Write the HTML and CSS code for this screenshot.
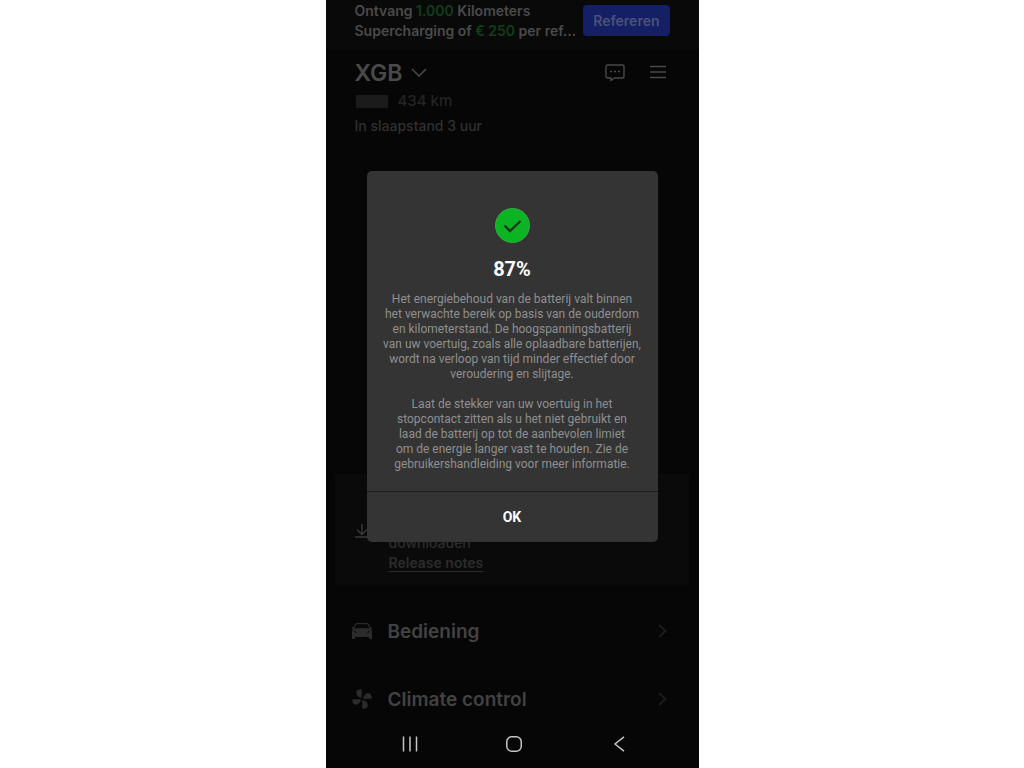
FILE: index.html
```html
<!DOCTYPE html>
<html lang="nl">
<head>
<meta charset="utf-8">
<meta name="viewport" content="width=device-width, initial-scale=1">
<title>Batterijstatus</title>
<link rel="stylesheet" href="styles.css">
</head>
<body>
<div class="phone">
  <div class="app">
    <section class="promo">
      <p class="promo-text">Ontvang <span class="accent">1.000</span> Kilometers<br>Supercharging of <span class="accent">€ 250</span> per ref…</p>
      <button class="promo-button" type="button">Refereren</button>
    </section>
    <header class="header">
      <div class="title-row">
        <button class="vehicle" type="button">
          <span>XGB</span>
          <svg width="16" height="10" viewBox="0 0 16 10" fill="none" stroke="currentColor" stroke-width="1.5"><path d="M1 1l7 7 7-7"/></svg>
        </button>
        <div class="actions">
          <button class="icon-button" type="button" aria-label="Berichten">
            <svg width="20" height="18" viewBox="0 0 20 18" fill="none" stroke="currentColor" stroke-width="1.4" stroke-linejoin="round"><path d="M2.500 1h15Q19 1 19 2.500v10Q19 14 17.500 14H9.500l-3.500 2.500V14H2.500Q1 14 1 12.500v-10Q1 1 2.500 1z"/><path d="M5 7.500h2M9 7.500h2M13 7.500h2" stroke-width="1.600"/></svg>
          </button>
          <button class="icon-button" type="button" aria-label="Menu">
            <svg width="16" height="18" viewBox="0 0 16 18" fill="none" stroke="currentColor" stroke-width="1.500"><path d="M0 2.500h16M0 8h16M0 13.500h16"/></svg>
          </button>
        </div>
      </div>
      <p class="range"><span class="battery"></span>434 km</p>
      <p class="status">In slaapstand 3 uur</p>
    </header>
    <section class="update">
      <svg class="update-icon" width="15" height="14" viewBox="0 0 15 14" fill="none" stroke="currentColor" stroke-width="1.400"><path d="M7 0v10M2 5.500l5 5 5-5M0 13h14"/></svg>
      <div class="update-text">
        <p>downloaden</p>
        <a class="notes" href="#">Release notes</a>
      </div>
    </section>
    <nav class="menu">
      <a class="menu-item" href="#">
        <svg width="20" height="16" viewBox="0 0 20 16" fill="currentColor" fill-rule="evenodd"><path d="M5 0h10q1.500 0 2.200 1.500L18.500 4.500l1.500-.5v1.500l-1 .7q1 1 1 2.500V16h-3v-2H3v2H0V8.700q0-1.500 1-2.500l-1-.7V4l1.500.5 1.300-3Q3.500 0 5 0zM5 1.300q-.8 0-1.200.9L2.500 5.500q7.500-1 15 0l-1.300-3.300q-.4-.9-1.200-.9zM2 8q0 1.800 3 1.800-.7-1.500-3-1.800zm16 0q-2.300.3-3 1.800 3 0 3-1.800z"/></svg>
        <span>Bediening</span>
        <svg class="chevron" width="9" height="14" viewBox="0 0 9 14" fill="none" stroke="currentColor" stroke-width="2"><path d="M1 1l6.500 6L1 13"/></svg>
      </a>
      <a class="menu-item" href="#">
        <svg width="20" height="20" viewBox="0 0 20 20" fill="currentColor"><path d="M9.700 9V.3Q3.800 0 4.300 4.500 5 8 9.700 9z"/><path d="M11 9.700h8.700Q20 3.800 15.500 4.300 12 5 11 9.700z"/><path d="M10.300 11v8.700q5.900.3 5.400-4.200-.7-3.500-5.400-4.500z"/><path d="M9 10.300H.3Q0 16.200 4.500 15.700 8 15 9 10.300z"/></svg>
        <span>Climate control</span>
        <svg class="chevron" width="9" height="14" viewBox="0 0 9 14" fill="none" stroke="currentColor" stroke-width="2"><path d="M1 1l6.500 6L1 13"/></svg>
      </a>
    </nav>
  </div>
  <nav class="system-bar">
    <button class="icon-button" type="button" aria-label="Recent"><svg width="16" height="16" viewBox="0 0 16 16" stroke="currentColor" stroke-width="1.500"><path d="M1.500 0.500v15M8 0.500v15M14.500 0.500v15"/></svg></button>
    <button class="icon-button" type="button" aria-label="Start"><svg width="16" height="16" viewBox="0 0 16 16" fill="none" stroke="currentColor" stroke-width="1.500"><rect x="0.750" y="0.750" width="14.500" height="14.500" rx="5"/></svg></button>
    <button class="icon-button" type="button" aria-label="Terug"><svg width="16" height="16" viewBox="0 0 16 16" fill="none" stroke="currentColor" stroke-width="1.500"><path d="M13 .8L4 8l9 7.200"/></svg></button>
  </nav>
  <div class="overlay">
    <div class="dialog" role="dialog" aria-labelledby="dialog-title">
      <div class="dialog-body">
        <svg class="check" width="35" height="35" viewBox="0 0 35 35" fill="none"><circle cx="17.500" cy="17.500" r="17" fill="#0bb423" stroke="#2fae3d"/><path d="M9.500 17.500l5.500 5.500 10.500-10" stroke="#243524" stroke-width="2.400"/></svg>
        <h1 class="dialog-title" id="dialog-title">87%</h1>
        <p class="dialog-text">Het energiebehoud van de batterij valt binnen<br>het verwachte bereik op basis van de ouderdom<br>en kilometerstand. De hoogspanningsbatterij<br>van uw voertuig, zoals alle oplaadbare batterijen,<br>wordt na verloop van tijd minder effectief door<br>veroudering en slijtage.</p>
        <p class="dialog-text">Laat de stekker van uw voertuig in het<br>stopcontact zitten als u het niet gebruikt en<br>laad de batterij op tot de aanbevolen limiet<br>om de energie langer vast te houden. Zie de<br>gebruikershandleiding voor meer informatie.</p>
      </div>
      <button class="ok" type="button">OK</button>
    </div>
  </div>
</div>
</body>
</html>
```
FILE: styles.css
```css
* { box-sizing: border-box; }
body { margin: 0; background: #fff; font-family: Inter, "Liberation Sans", sans-serif; }
p, h1 { margin: 0; }
button { border: 0; padding: 0; background: none; color: inherit; font: inherit; }
a { color: inherit; text-decoration: none; }
svg { display: block; flex: none; }

.phone {
  position: relative;
  display: flex;
  flex-direction: column;
  max-width: 373px;
  min-height: 100vh;
  margin: 0 auto;
  background: #060606;
  color: #4a4a4a;
}
.app { flex: 1; display: flex; flex-direction: column; }

.promo {
  display: flex;
  justify-content: space-between;
  align-items: flex-start;
  padding: 0 29px 9px;
  background: #090909;
}
.promo-text { padding-top: 1px; font-size: 14px; font-weight: 600; line-height: 20px; white-space: nowrap; }
.accent { color: #123f18; }
.promo-button {
  margin-top: 5px;
  padding: 0 10px;
  border-radius: 4px;
  background: #141f66;
  color: #4b5178;
  font-size: 14px;
  font-weight: 600;
  line-height: 31px;
}

.header { padding: 10px 33px 0 29px; }
.title-row { display: flex; justify-content: space-between; align-items: center; }
.vehicle { display: flex; align-items: center; gap: 9px; font-size: 23px; font-weight: 600; line-height: 26px; }
.actions { display: flex; gap: 25px; }
.range { display: flex; align-items: center; gap: 10px; margin-top: 5px; color: #242424; font-size: 15px; font-weight: 500; line-height: 20px; }
.battery { width: 32px; height: 13px; margin-left: 1px; background: #1b1b1b; }
.status { margin-top: 5px; color: #303030; font-size: 14px; font-weight: 500; line-height: 20px; }

.update {
  display: flex;
  align-items: flex-end;
  gap: 19px;
  margin: auto 10px 10px 9px;
  min-height: 113px;
  padding: 0 20px 14px;
  background: #0a0a0a;
  color: #2c2c2c;
  font-size: 14px;
  font-weight: 500;
  line-height: 20px;
}
.update-icon { margin-bottom: 35px; color: #3a3a3a; }
.notes { font-weight: 600; text-decoration: underline; text-underline-offset: 3px; }

.menu { display: flex; flex-direction: column; }
.menu-item {
  display: flex;
  align-items: center;
  gap: 16px;
  min-height: 68px;
  padding: 0 32px 0 26px;
  color: #424242;
  font-size: 19px;
  font-weight: 600;
}
.menu-item svg { color: #2b2b2b; }
.menu-item .chevron { margin-left: auto; color: #1c1c1c; }

.system-bar {
  display: flex;
  justify-content: space-between;
  padding: 3px 72px 16px 76px;
  color: #c4c4c4;
}

.overlay {
  position: absolute;
  inset: 0;
  display: flex;
  align-items: center;
  justify-content: center;
  padding: 0 41px 56px;
}
.dialog { width: 100%; border-radius: 5px; overflow: hidden; background: #343434; font-family: Roboto, sans-serif; }
.dialog-body { padding: 37px 0 19px; text-align: center; border-bottom: 1px solid #1c1c1c; }
.check { margin: 0 auto; }
.dialog-title { margin: 13px 0 10px; color: #fff; font-size: 20px; font-weight: 700; line-height: 26px; }
.dialog-text { color: #8f8f8f; font-size: 12px; line-height: 15px; }
.dialog-text + .dialog-text { margin-top: 15px; }
.ok { width: 100%; color: #fff; font-size: 14px; font-weight: 700; line-height: 50px; }
```
